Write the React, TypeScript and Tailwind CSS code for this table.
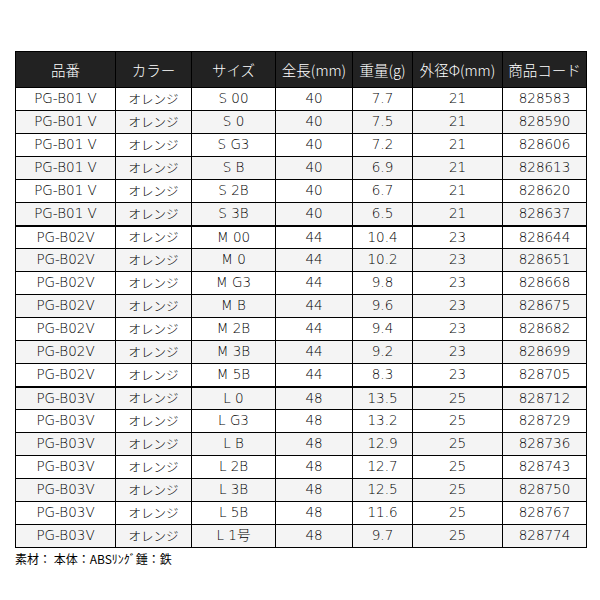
import React from "react";

const rows: [string, string, string, string, string, string, string][] = [
  ["PG-B01 V", "オレンジ", "S 00", "40", "7.7", "21", "828583"],
  ["PG-B01 V", "オレンジ", "S 0", "40", "7.5", "21", "828590"],
  ["PG-B01 V", "オレンジ", "S G3", "40", "7.2", "21", "828606"],
  ["PG-B01 V", "オレンジ", "S B", "40", "6.9", "21", "828613"],
  ["PG-B01 V", "オレンジ", "S 2B", "40", "6.7", "21", "828620"],
  ["PG-B01 V", "オレンジ", "S 3B", "40", "6.5", "21", "828637"],
  ["PG-B02V", "オレンジ", "M 00", "44", "10.4", "23", "828644"],
  ["PG-B02V", "オレンジ", "M 0", "44", "10.2", "23", "828651"],
  ["PG-B02V", "オレンジ", "M G3", "44", "9.8", "23", "828668"],
  ["PG-B02V", "オレンジ", "M B", "44", "9.6", "23", "828675"],
  ["PG-B02V", "オレンジ", "M 2B", "44", "9.4", "23", "828682"],
  ["PG-B02V", "オレンジ", "M 3B", "44", "9.2", "23", "828699"],
  ["PG-B02V", "オレンジ", "M 5B", "44", "8.3", "23", "828705"],
  ["PG-B03V", "オレンジ", "L 0", "48", "13.5", "25", "828712"],
  ["PG-B03V", "オレンジ", "L G3", "48", "13.2", "25", "828729"],
  ["PG-B03V", "オレンジ", "L B", "48", "12.9", "25", "828736"],
  ["PG-B03V", "オレンジ", "L 2B", "48", "12.7", "25", "828743"],
  ["PG-B03V", "オレンジ", "L 3B", "48", "12.5", "25", "828750"],
  ["PG-B03V", "オレンジ", "L 5B", "48", "11.6", "25", "828767"],
  ["PG-B03V", "オレンジ", "L 1号", "48", "9.7", "25", "828774"],
];

const headers = ["品番", "カラー", "サイズ", "全長(mm)", "重量(g)", "外径Φ(mm)", "商品コード"];
const widths = ["w-[100px]", "w-[76px]", "w-[84px]", "w-[77px]", "w-[60px]", "w-[90px]", "w-[84px]"];

export default function App() {
  return (
    <div className="w-[600px] h-[600px] bg-white pt-[51px] pl-[15px] font-['DejaVu_Sans','Noto_Sans_CJK_JP',sans-serif]">
      <table className="border-collapse table-fixed w-[571px] text-black">
        <thead>
          <tr className="bg-[#222222] text-white">
            {headers.map((h, i) => (
              <th
                key={h}
                className={`${widths[i]} h-[36px] border border-black p-0 text-[14.5px] font-light text-center font-['Noto_Sans_CJK_JP',sans-serif]`}
              >
                {h}
              </th>
            ))}
          </tr>
        </thead>
        <tbody>
          {rows.map((r, ri) => {
            const thick = ri === 5 || ri === 12;
            return (
              <tr key={ri} className={ri % 2 === 1 ? "bg-[#f4f4f4]" : "bg-white"}>
                {r.map((c, ci) => (
                  <td
                    key={ci}
                    className={`h-[23px] border border-black p-0 leading-none text-center ${
                      ci === 1
                        ? "text-[12.5px] font-light font-['Noto_Sans_CJK_JP',sans-serif]"
                        : "text-[13.5px] font-extralight"
                    } ${thick ? "border-b-2" : ""}`}
                  >
                    {c}
                  </td>
                ))}
              </tr>
            );
          })}
        </tbody>
      </table>
      <div className="mt-[3px] text-[12px] leading-[16px] text-black font-['Noto_Sans_CJK_JP',sans-serif]">
        素材： 本体：ABSﾘﾝｸﾞ錘：鉄
      </div>
    </div>
  );
}
